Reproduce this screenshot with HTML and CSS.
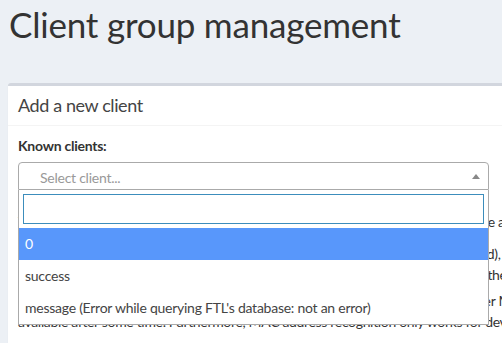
FILE: index.html
```html
<!DOCTYPE html>
<html lang="en">
<head>
    <meta charset="UTF-8">
    <meta name="viewport" content="width=device-width, initial-scale=1.0">
    <title>Client group management</title>
    <link rel="stylesheet" href="styles.css">
</head>
<body>
    <div class="content-header">
        <h1>Client group management</h1>
    </div>

    <div class="content">
        <div class="box">
            <div class="box-header">
                <h3>Add a new client</h3>
            </div>
            <div class="box-body">
                <label>Known clients:</label>
                <div class="select-wrap">
                    <div class="select-box">
                        <span class="placeholder">Select client...</span>
                        <span class="arrow"></span>
                    </div>
                    <div class="dropdown">
                        <div class="search">
                            <input type="text" class="search-field">
                        </div>
                        <ul class="options">
                            <li class="highlighted">0</li>
                            <li>success</li>
                            <li>message (Error while querying FTL's database: not an error)</li>
                        </ul>
                    </div>
                </div>

                <div class="hints">
                    <p>You can select an existing client or add a custom one by typing into the field above and confirming your entry with <kbd>&#x23CE;</kbd>.</p>
                    <p>Clients may be described either by their IP addresses (IPv4 and IPv6 are supported), IP subnets (CIDR notation, like 192.168.2.0/24), their<br><span class="tight">MAC addresses (like 12:34:56:78:9A:BC), by their hostnames (like localhost), or by the interface they are connected to (prefaced with a colon, like :eth0).</span></p>
                    <p>Note that client recognition by IP addresses (incl. subnet ranges) are preferred over MAC address, host name or interface recognition as the two latter will only be<br>available after some time. Furthermore, MAC address recognition only works for devices at most one networking hop away from your Pi-hole.</p>
                </div>
            </div>
        </div>
    </div>
</body>
</html>
```

FILE: styles.css
```css
body {
    font-family: Lato, "Open Sans", sans-serif;
    font-size: 14px;
    letter-spacing: -0.25px;
    color: #333;
    margin: 0;
    padding: 0;
    background-color: #ecf0f5;
    overflow: hidden;
}
.content-header {
    padding: 3px 9px 0;
}
.content-header h1 {
    margin: 0;
    font-size: 35px;
    font-weight: 400;
    line-height: 42px;
    letter-spacing: -0.2px;
}
.content {
    padding: 38px 0 0 8px;
}
.box {
    width: 1200px;
    background-color: #fff;
    border-top: 3px solid #d2d6de;
    border-radius: 3px;
    box-shadow: 0 1px 1px rgba(0, 0, 0, 0.1);
}
.box-header {
    padding: 10px;
    border-bottom: 1px solid #f4f4f4;
}
.box-header h3 {
    margin: 0;
    font-size: 18px;
    font-weight: 400;
    line-height: 19px;
    letter-spacing: -0.4px;
    color: #444;
}
.box-body {
    padding: 10px;
}
label {
    display: block;
    font-weight: 700;
    line-height: 20px;
    margin-bottom: 6px;
}
.select-wrap {
    position: relative;
    width: 471px;
}
.select-box {
    height: 28px;
    box-sizing: border-box;
    border: 1px solid #aaa;
    border-radius: 4px 4px 0 0;
    padding: 0 0 0 21px;
    line-height: 30px;
    color: #999;
    position: relative;
}
.arrow {
    position: absolute;
    right: 8px;
    top: 11px;
    border-style: solid;
    border-width: 0 4px 5px;
    border-color: transparent transparent #888;
}
.dropdown {
    position: absolute;
    top: 100%;
    left: 0;
    right: 0;
    background-color: #fff;
    border: 1px solid #aaa;
    border-top: none;
    z-index: 10;
}
.search {
    padding: 4px;
}
.search-field {
    display: block;
    width: 100%;
    height: 30px;
    box-sizing: border-box;
    border: 1px solid #3c8dbc;
    margin: 0;
    outline: none;
}
.options {
    list-style: none;
    margin: 0;
    padding: 0;
}
.options li {
    padding: 6px;
    line-height: 20px;
    color: #444;
}
.options li.highlighted {
    background-color: #5897fb;
    color: #fff;
}
.hints {
    padding-top: 21px;
    letter-spacing: -0.33px;
}
.hints p {
    margin: 0 0 8px;
    line-height: 21px;
    white-space: nowrap;
}
.hints p + p + p {
    margin-top: -3px;
}
.tight {
    word-spacing: -0.7px;
}
kbd {
    font-family: "Liberation Mono", monospace;
    font-size: 12px;
    padding: 2px 4px;
    color: #fff;
    background-color: #333;
    border-radius: 3px;
}
```
